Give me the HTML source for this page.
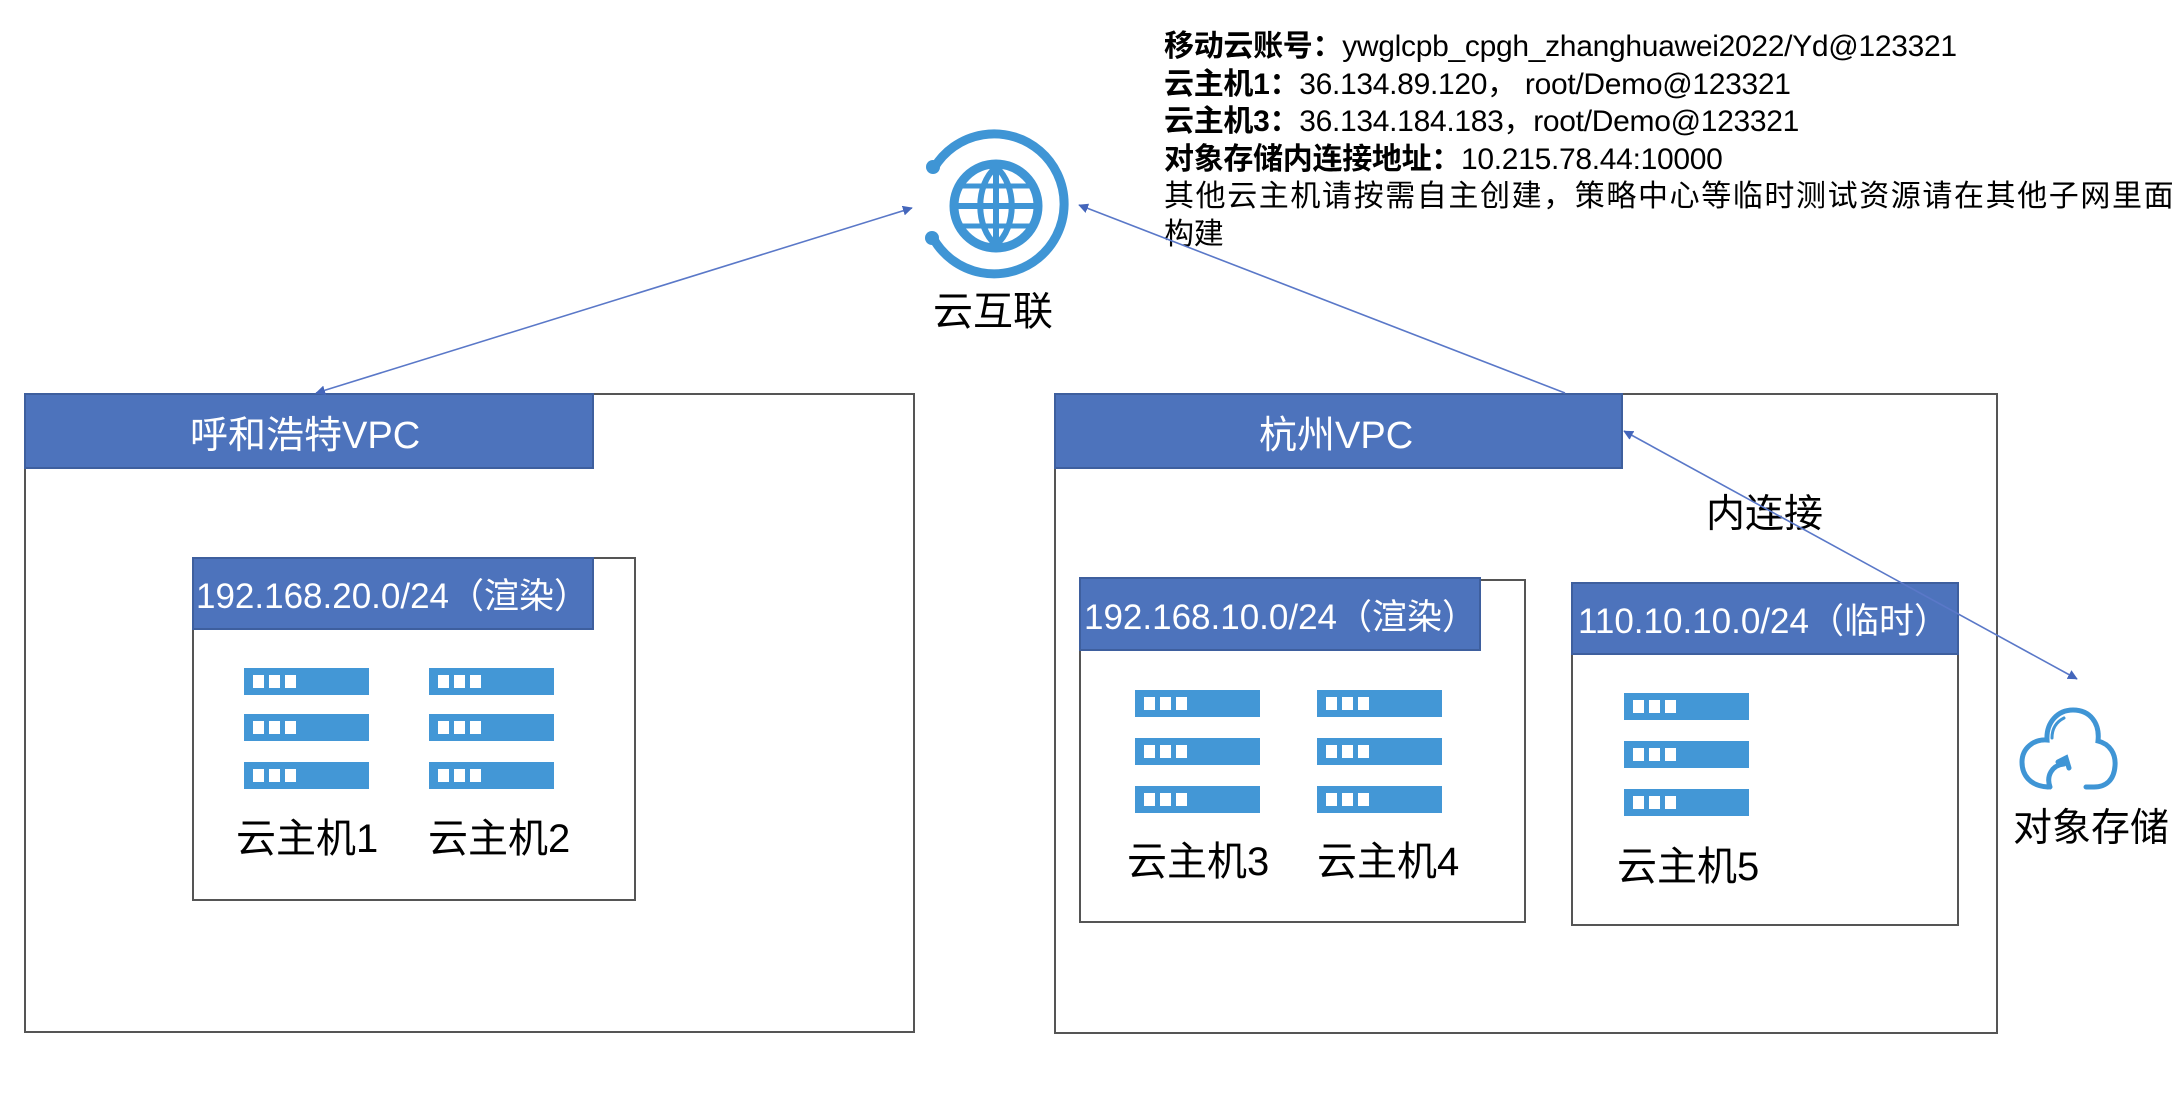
<!DOCTYPE html>
<html><head><meta charset="utf-8"><style>
*{margin:0;padding:0;box-sizing:border-box}
body{width:2178px;height:1096px;background:#fff;position:relative;overflow:hidden;font-family:"Liberation Sans","Noto Sans CJK SC",sans-serif;color:#000}
.box{position:absolute;border:2px solid #555;background:#fff}
.hdr{position:absolute;background:#4d73bc;border:2px solid #3e5f9e;color:#fff;font-size:38px;display:flex;align-items:center;white-space:nowrap;overflow:hidden}
.srv{position:absolute;width:125px;height:27px;background:#4397d6}
.srv i{position:absolute;top:7px;width:11px;height:13px;background:#fff}
.lbl{position:absolute;font-size:40px;white-space:nowrap}
.info{position:absolute;left:1164px;top:28px;font-size:30px;line-height:37.5px;white-space:nowrap;letter-spacing:-0.3px}
.info b{font-weight:bold}
</style></head><body>

<div class="box" style="left:24px;top:393px;width:891px;height:640px"></div>
<div class="hdr" style="left:24px;top:393px;width:570px;height:76px;padding-left:164px">呼和浩特VPC</div>
<div class="box" style="left:192px;top:557px;width:444px;height:344px"></div>
<div class="hdr" style="left:192px;top:557px;width:402px;height:73px;padding-left:2px;font-size:35px">192.168.20.0/24（渲染）</div>

<div class="box" style="left:1054px;top:393px;width:944px;height:641px"></div>
<div class="hdr" style="left:1054px;top:393px;width:569px;height:76px;padding-left:203px">杭州VPC</div>
<div class="box" style="left:1079px;top:579px;width:447px;height:344px"></div>
<div class="hdr" style="left:1079px;top:577px;width:402px;height:74px;padding-left:3px;font-size:35px">192.168.10.0/24（渲染）</div>
<div class="box" style="left:1571px;top:582px;width:388px;height:344px"></div>
<div class="hdr" style="left:1571px;top:582px;width:388px;height:73px;padding-left:5px;font-size:35px">110.10.10.0/24（临时）</div>

<div id="servers"></div>

<div class="lbl" style="left:236px;top:806px">云主机1</div>
<div class="lbl" style="left:428px;top:806px">云主机2</div>
<div class="lbl" style="left:1127px;top:829px">云主机3</div>
<div class="lbl" style="left:1317px;top:829px">云主机4</div>
<div class="lbl" style="left:1617px;top:834px">云主机5</div>
<div class="lbl" style="left:1706px;top:483px;font-size:39px">内连接</div>
<div class="lbl" style="left:2013px;top:797px;font-size:39px">对象存储</div>
<div class="lbl" style="left:933px;top:279px">云互联</div>

<div class="info">
<div><b>移动云账号：</b>ywglcpb_cpgh_zhanghuawei2022/Yd@123321</div>
<div><b>云主机1：</b>36.134.89.120， root/Demo@123321</div>
<div><b>云主机3：</b>36.134.184.183，root/Demo@123321</div>
<div><b>对象存储内连接地址：</b>10.215.78.44:10000</div>
<div style="letter-spacing:1.6px">其他云主机请按需自主创建，策略中心等临时测试资源请在其他子网里面</div>
<div>构建</div>
</div>

<svg width="2178" height="1096" style="position:absolute;left:0;top:0;pointer-events:none">
<defs><marker id="a" markerWidth="10" markerHeight="10" refX="9" refY="5" orient="auto-start-reverse" markerUnits="userSpaceOnUse"><path d="M0,0 L10,5 L0,10 z" fill="#4466bb" transform="scale(1.4) translate(-3,-1.5)"/></marker></defs>
<g stroke="#5a78c8" stroke-width="1.6" fill="none">
<line x1="316" y1="393" x2="912" y2="208" marker-start="url(#a)" marker-end="url(#a)"/>
<line x1="1565" y1="393" x2="1079" y2="205" marker-end="url(#a)"/>
<line x1="2077" y1="679" x2="1624" y2="431" marker-start="url(#a)" marker-end="url(#a)"/>
</g>
<g stroke="#3f95d5" fill="none" stroke-width="9">
<path d="M934 168 A70 70 0 1 1 933 238" stroke-linecap="round"/>
<circle cx="996" cy="206" r="42"/>
<line x1="956" y1="206" x2="1036" y2="206" stroke-width="6"/>
<line x1="996" y1="166" x2="996" y2="246" stroke-width="6"/>
<path d="M996 167 C975 185 975 227 996 245 M996 167 C1017 185 1017 227 996 245" stroke-width="6"/>
<line x1="962" y1="186" x2="1030" y2="186" stroke-width="5"/>
<line x1="962" y1="226" x2="1030" y2="226" stroke-width="5"/>
</g>
<circle cx="933" cy="167" r="7" fill="#3f95d5"/>
<circle cx="932" cy="238" r="7" fill="#3f95d5"/>
<g stroke="#3f95d5" fill="none" stroke-width="5" stroke-linecap="round">
<path d="M2048 787 C2030 786 2022 775 2022 762 C2022 748 2034 739 2047 740 C2046 722 2058 710 2073 710 C2090 710 2100 723 2098 741 C2110 744 2116 754 2115 766 C2114 780 2106 787 2094 787 L2086 787"/>
<path d="M2050 787 C2046 776 2052 765 2064 764" />
<path d="M2058 762 L2066 758 L2069 768" />
<path d="M2064 718 C2056 722 2052 729 2052 738" stroke-width="3"/>
</g>
</svg>

<script>
var s=document.getElementById('servers'),h='';
function col(x,ys){ys.forEach(function(y){h+='<div class="srv" style="left:'+x+'px;top:'+y+'px"><i style="left:9px"></i><i style="left:25px"></i><i style="left:41px"></i></div>';});}
col(244,[668,714,762]);col(429,[668,714,762]);
col(1135,[690,738,786]);col(1317,[690,738,786]);
col(1624,[693,741,789]);
s.innerHTML=h;
</script>
</body></html>
